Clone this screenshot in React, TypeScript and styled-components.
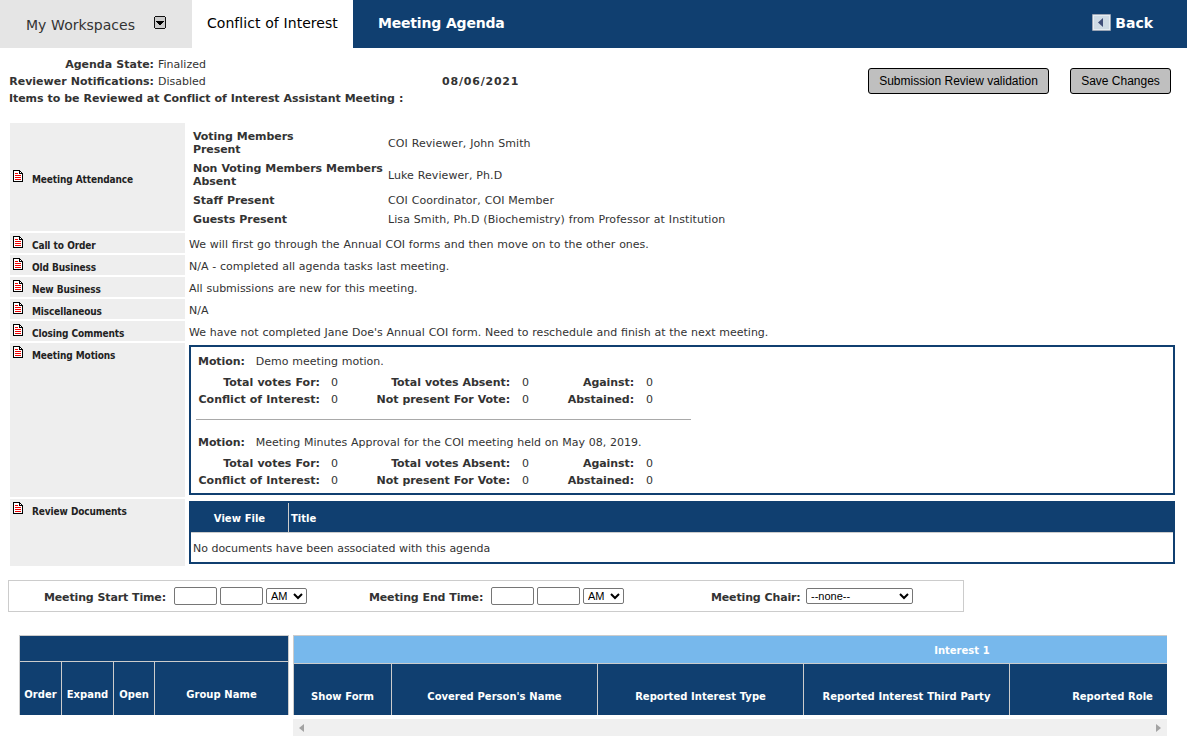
import React from 'react';
import styled, { createGlobalStyle, css } from 'styled-components';

const NAVY = '#103f70';

const Global = createGlobalStyle`
  * { box-sizing: border-box; }
  html, body { margin: 0; padding: 0; background: #fff; overflow: hidden; }
  body {
    font-family: Verdana, "DejaVu Sans", sans-serif;
    font-size: 11px;
    line-height: 17px;
    color: #333;
    white-space: nowrap;
    word-spacing: 0.3px;
  }
  b { letter-spacing: -0.07px; }
`;

const Page = styled.div`
  width: 1187px;
  height: 747px;
  overflow: hidden;
`;

const TopBar = styled.header`
  display: flex;
  height: 48px;
  background: ${NAVY};
  font-size: 14px;
`;

const WorkspacesTab = styled.div`
  display: flex;
  width: 192px;
  padding: 16px 0 0 26px;
  gap: 19px;
  background: #e5e5e5;
  line-height: 18px;
`;

const ActiveTab = styled.div`
  width: 161px;
  padding: 14px 0 0 15px;
  background: #fff;
  color: #000;
  line-height: 18px;
  letter-spacing: 0.04px;
`;

const BarTitle = styled.div`
  flex: 1;
  padding: 14px 0 0 25px;
  color: #fff;
  font-weight: bold;
  line-height: 18px;
  letter-spacing: -0.2px;
`;

const BackLink = styled.div`
  display: flex;
  gap: 4px;
  padding: 14px 34px 0 0;
  color: #fff;
  font-weight: bold;
  line-height: 18px;
`;

const Summary = styled.section`
  display: flex;
  height: 75px;
  padding: 8px 16px 0 9px;
`;

const SummaryInfo = styled.div`
  width: 433px;
`;

const InfoLine = styled.div`
  display: flex;
  gap: 4px;
`;

const InfoLabel = styled.b<{ $width?: number }>`
  width: ${p => (p.$width ? `${p.$width}px` : 'auto')};
  text-align: right;
  ${p => p.$width && css`letter-spacing: 0;`}
`;

const MeetingDate = styled.b`
  flex: 1;
  padding-top: 17px;
  letter-spacing: 0.8px;
`;

const Actions = styled.div`
  display: flex;
  gap: 21px;
  padding-top: 12px;
`;

const ActionButton = styled.button<{ $width: number }>`
  width: ${p => p.$width}px;
  height: 26px;
  padding: 0;
  border: 1px solid #000;
  border-radius: 3px;
  background: #bfbfbf;
  color: #000;
  font: 12px Arial, "Liberation Sans", sans-serif;
  word-spacing: 0;
`;

const Sections = styled.section`
  display: flex;
  flex-direction: column;
  gap: 2px;
  padding: 0 12px 0 10px;
`;

const SectionRow = styled.div<{ $height: number }>`
  display: flex;
  gap: 4px;
  height: ${p => p.$height}px;
`;

const SectionLabel = styled.div<{ $middle?: boolean }>`
  display: flex;
  width: 175px;
  gap: 9px;
  padding: ${p => (p.$middle ? '47px' : '3px')} 0 0 3px;
  background: #eee;
  color: #222;
  font-family: "DejaVu Sans Condensed", Tahoma, sans-serif;
  font-size: 10px;
  font-weight: bold;
  letter-spacing: -0.13px;
  line-height: 20px;
  svg { flex: none; }
`;

const SectionText = styled.div`
  padding-top: 3px;
`;

const Attendance = styled.div`
  display: grid;
  grid-template-columns: 195px auto;
  grid-template-rows: 26px 26px 13px 13px;
  row-gap: 6px;
  align-items: center;
  padding: 7px 0 0 4px;
  align-content: start;
  line-height: 13px;
  span { letter-spacing: 0.07px; }
`;

const Panel = styled.div<{ $height: number }>`
  width: 986px;
  height: ${p => p.$height}px;
  margin-top: 2px;
  border: 2px solid ${NAVY};
`;

const Motion = styled.div<{ $ruled?: boolean }>`
  width: 495px;
  height: 73px;
  margin-left: 5px;
  padding: 6px 0 0 2px;
  ${p => p.$ruled && css`border-bottom: 1px solid #a9a9a9;`}
`;

const MotionHeading = styled.div<{ $gap: number }>`
  display: flex;
  gap: 11px;
  padding-top: ${p => p.$gap}px;
  margin-bottom: 4px;
`;

const VoteRow = styled.div`
  display: grid;
  grid-template-columns: 122px 24px 166px 24px 100px 24px;
  b { text-align: right; }
  b:first-child { letter-spacing: 0; }
  span { padding-left: 12px; }
  b:first-child + span { padding-left: 11px; }
`;

const DocHeader = styled.div`
  display: flex;
  height: 30px;
  background: ${NAVY};
  border-bottom: 1px solid #ccc;
  color: #fff;
  font-size: 10px;
  font-weight: bold;
  line-height: 31px;
`;

const ViewFileCell = styled.div`
  width: 98px;
  border-right: 1px solid #ccc;
  text-align: center;
`;

const TitleCell = styled.div`
  padding-left: 2px;
`;

const DocEmpty = styled.div`
  padding: 7px 0 0 2px;
  letter-spacing: -0.07px;
`;

const TimeBar = styled.section`
  display: flex;
  align-items: flex-start;
  width: 956px;
  height: 32px;
  margin: 14px 0 23px 8px;
  padding: 6px 0 0 35px;
  border: 1px solid #ccc;
`;

const FieldLabel = styled.b<{ $width: number }>`
  width: ${p => p.$width}px;
  padding-top: 2px;
  letter-spacing: -0.15px;
`;

const TimeInput = styled.input`
  width: 43px;
  height: 18px;
  margin-right: 3px;
  border: 1px solid #767676;
  border-radius: 2px;
`;

const Select = styled.select<{ $width: number; $after?: number }>`
  width: ${p => p.$width}px;
  height: 16px;
  margin: 1px ${p => p.$after ?? 0}px 0 0;
  padding: 0;
  border: 1px solid #767676;
  border-radius: 2px;
  background-color: #fff;
  color: #000;
  font: 11px Arial, "Liberation Sans", sans-serif;
  word-spacing: 0;
`;

const Tables = styled.section`
  display: flex;
  align-items: flex-start;
  gap: 4px;
  padding-left: 19px;
  color: #fff;
  font-size: 10px;
  font-weight: bold;
`;

const GroupTable = styled.div`
  width: 270px;
  height: 80px;
  border: solid #ccc;
  border-width: 1px 1px 0;
  background: ${NAVY};
`;

const GroupBand = styled.div`
  height: 26px;
  border-bottom: 1px solid #ccc;
`;

const InterestTable = styled.div`
  width: 874px;
`;

const InterestGrid = styled.div`
  height: 80px;
  overflow: hidden;
  border: solid #ccc;
  border-width: 1px 0 0 1px;
  background: ${NAVY};
`;

const InterestBand = styled.div`
  width: 1336px;
  height: 28px;
  border-bottom: 1px solid #ccc;
  background: #77b8ec;
  text-align: center;
  line-height: 29px;
`;

const HeadRow = styled.div<{ $height: number }>`
  display: flex;
  height: ${p => p.$height}px;
  line-height: 66px;
`;

const HeadCell = styled.div<{ $width: number; $last?: boolean }>`
  flex: none;
  width: ${p => p.$width}px;
  text-align: center;
  ${p => !p.$last && css`border-right: 1px solid #ccc;`}
`;

const ScrollTrack = styled.div`
  display: flex;
  justify-content: space-between;
  align-items: center;
  height: 17px;
  margin-top: 4px;
  padding: 0 6px;
  background: #f0f0f0;
`;

const DocIcon = () => (
  <svg width="10" height="12" viewBox="0 0 10 12" shapeRendering="crispEdges">
    <path d="M0 0h7v1h1v1h1v1h1v9H0z" fill="#000" />
    <path d="M1 1h5v3h3v7H1z" fill="#fff" />
    <path d="M7 2h1v1H7z" fill="#fff" />
    <path d="M2 3h3v1H2zM2 5h6v1H2zM2 7h6v1H2zM2 9h6v1H2z" fill="#f00000" />
  </svg>
);

const MenuIcon = () => (
  <svg width="12" height="13" viewBox="0 0 12 13" shapeRendering="crispEdges">
    <path d="M1 0h10v1h1v11h-1v1H1v-1H0V1h1z" fill="#111" />
    <path d="M1 1h10v11H1z" fill="#ccc" />
    <path d="M2 5h8v1H9v1H8v1H7v1H5V8H4V7H3V6H2z" fill="#000" />
  </svg>
);

const BackIcon = () => (
  <svg width="19" height="17" viewBox="0 0 19 17">
    <rect width="19" height="17" rx="1" fill="#9aa4b4" />
    <rect x="1.5" y="1.5" width="16" height="14" fill="#cfdbe5" stroke="#e6edf2" />
    <path d="M11 4v9L6 8.5z" fill="#3f4e78" />
  </svg>
);

const notes = [
  ['Call to Order', 'We will first go through the Annual COI forms and then move on to the other ones.'],
  ['Old Business', 'N/A - completed all agenda tasks last meeting.'],
  ['New Business', 'All submissions are new for this meeting.'],
  ['Miscellaneous', 'N/A'],
  ['Closing Comments', "We have not completed Jane Doe's Annual COI form. Need to reschedule and finish at the next meeting."],
];

const Votes = () => (
  <>
    <VoteRow>
      <b>Total votes For:</b><span>0</span>
      <b>Total votes Absent:</b><span>0</span>
      <b>Against:</b><span>0</span>
    </VoteRow>
    <VoteRow>
      <b>Conflict of Interest:</b><span>0</span>
      <b>Not present For Vote:</b><span>0</span>
      <b>Abstained:</b><span>0</span>
    </VoteRow>
  </>
);

const Label = ({ text, middle }: { text: string; middle?: boolean }) => (
  <SectionLabel $middle={middle}>
    <DocIcon />
    <span>{text}</span>
  </SectionLabel>
);

export default function App() {
  return (
    <Page>
      <Global />
      <TopBar>
        <WorkspacesTab><span>My Workspaces</span><MenuIcon /></WorkspacesTab>
        <ActiveTab>Conflict of Interest</ActiveTab>
        <BarTitle>Meeting Agenda</BarTitle>
        <BackLink><BackIcon />Back</BackLink>
      </TopBar>

      <Summary>
        <SummaryInfo>
          <InfoLine><InfoLabel $width={145}>Agenda State:</InfoLabel>Finalized</InfoLine>
          <InfoLine><InfoLabel $width={145}>Reviewer Notifications:</InfoLabel>Disabled</InfoLine>
          <InfoLine><InfoLabel>Items to be Reviewed at Conflict of Interest Assistant Meeting :</InfoLabel></InfoLine>
        </SummaryInfo>
        <MeetingDate>08/06/2021</MeetingDate>
        <Actions>
          <ActionButton $width={181}>Submission Review validation</ActionButton>
          <ActionButton $width={101}>Save Changes</ActionButton>
        </Actions>
      </Summary>

      <Sections>
        <SectionRow $height={108}>
          <Label text="Meeting Attendance" middle />
          <Attendance>
            <b>Voting Members<br />Present</b><span>COI Reviewer, John Smith</span>
            <b>Non Voting Members Members<br />Absent</b><span>Luke Reviewer, Ph.D</span>
            <b>Staff Present</b><span>COI Coordinator, COI Member</span>
            <b>Guests Present</b><span>Lisa Smith, Ph.D (Biochemistry) from Professor at Institution</span>
          </Attendance>
        </SectionRow>
        {notes.map(([label, text]) => (
          <SectionRow key={label} $height={20}>
            <Label text={label} />
            <SectionText>{text}</SectionText>
          </SectionRow>
        ))}
        <SectionRow $height={154}>
          <Label text="Meeting Motions" />
          <Panel $height={150}>
            <Motion $ruled>
              <MotionHeading $gap={0}><b>Motion:</b>Demo meeting motion.</MotionHeading>
              <Votes />
            </Motion>
            <Motion>
              <MotionHeading $gap={8}><b>Motion:</b>Meeting Minutes Approval for the COI meeting held on May 08, 2019.</MotionHeading>
              <Votes />
            </Motion>
          </Panel>
        </SectionRow>
        <SectionRow $height={67}>
          <Label text="Review Documents" />
          <Panel $height={63}>
            <DocHeader>
              <ViewFileCell>View File</ViewFileCell>
              <TitleCell>Title</TitleCell>
            </DocHeader>
            <DocEmpty>No documents have been associated with this agenda</DocEmpty>
          </Panel>
        </SectionRow>
      </Sections>

      <TimeBar>
        <FieldLabel $width={130}>Meeting Start Time:</FieldLabel>
        <TimeInput /><TimeInput />
        <Select $width={41} $after={62}><option>AM</option><option>PM</option></Select>
        <FieldLabel $width={122}>Meeting End Time:</FieldLabel>
        <TimeInput /><TimeInput />
        <Select $width={41} $after={87}><option>AM</option><option>PM</option></Select>
        <FieldLabel $width={95}>Meeting Chair:</FieldLabel>
        <Select $width={107}><option>--none--</option></Select>
      </TimeBar>

      <Tables>
        <GroupTable>
          <GroupBand />
          <HeadRow $height={53}>
            <HeadCell $width={42}>Order</HeadCell>
            <HeadCell $width={52}>Expand</HeadCell>
            <HeadCell $width={41}>Open</HeadCell>
            <HeadCell $width={133} $last>Group Name</HeadCell>
          </HeadRow>
        </GroupTable>
        <InterestTable>
          <InterestGrid>
            <InterestBand>Interest 1</InterestBand>
            <HeadRow $height={51}>
              <HeadCell $width={98}>Show Form</HeadCell>
              <HeadCell $width={206}>Covered Person's Name</HeadCell>
              <HeadCell $width={206}>Reported Interest Type</HeadCell>
              <HeadCell $width={206}>Reported Interest Third Party</HeadCell>
              <HeadCell $width={206}>Reported Role</HeadCell>
            </HeadRow>
          </InterestGrid>
          <ScrollTrack>
            <svg width="5" height="8" viewBox="0 0 5 8"><path d="M5 0v8L0 4z" fill="#a3a3a3" /></svg>
            <svg width="5" height="8" viewBox="0 0 5 8"><path d="M0 0v8l5-4z" fill="#a3a3a3" /></svg>
          </ScrollTrack>
        </InterestTable>
      </Tables>
    </Page>
  );
}
